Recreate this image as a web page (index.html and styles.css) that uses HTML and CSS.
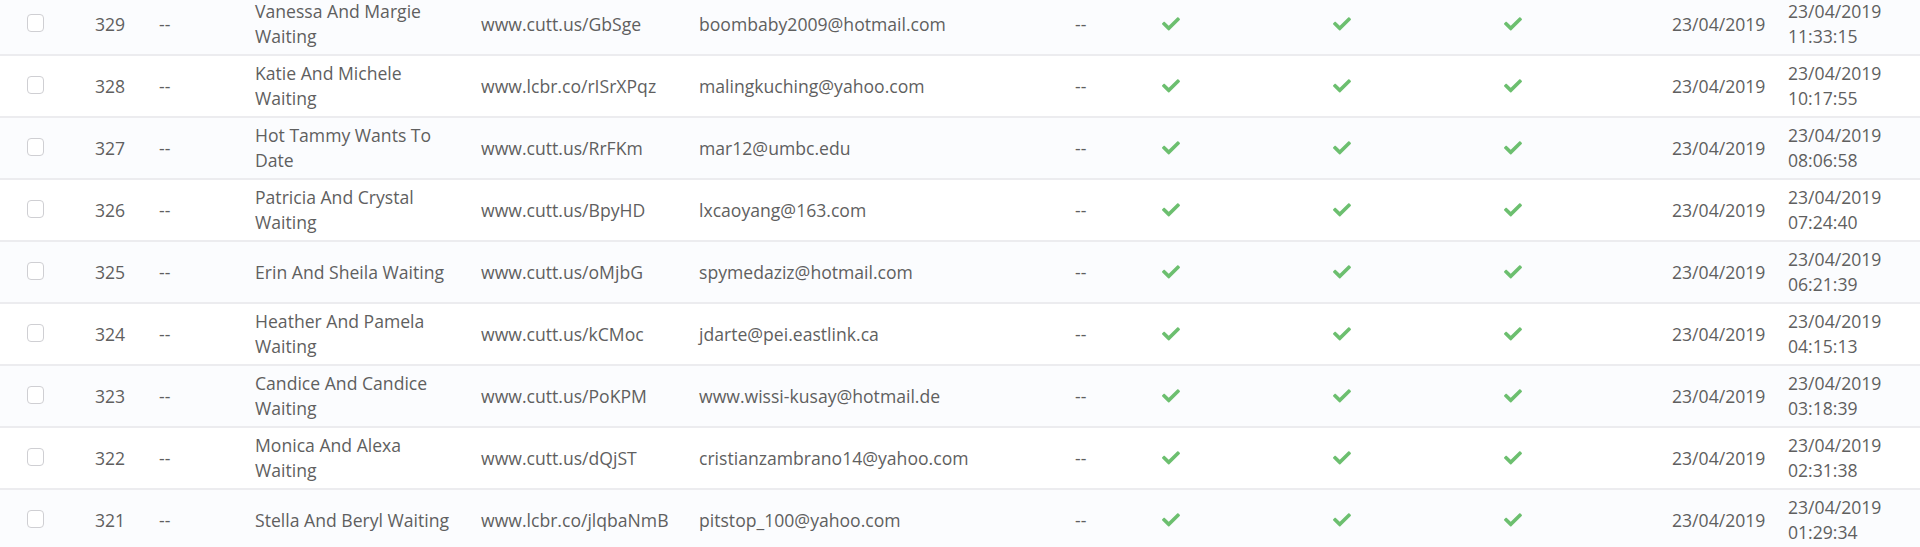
FILE: index.html
```html
<!DOCTYPE html>
<html lang="en">
<head>
<meta charset="utf-8">
<title>Links</title>
<link rel="stylesheet" href="styles.css">
</head>
<body>
<table class="grid">
  <colgroup>
    <col class="c-sel"><col class="c-id"><col class="c-dash"><col class="c-name"><col class="c-url"><col class="c-mail"><col class="c-dash2"><col class="c-ok"><col class="c-ok"><col class="c-ok-last"><col class="c-date"><col class="c-time">
  </colgroup>
  <tbody>
    <tr class="alt"><td class="sel"><span class="box"></span></td><td>329</td><td>--</td><td class="name">Vanessa And Margie Waiting</td><td>www.cutt.us/GbSge</td><td>boombaby2009@hotmail.com</td><td>--</td><td><svg class="ok" viewBox="0 70 512 380"><path d="M173.898 439.404l-166.4-166.4c-9.997-9.997-9.997-26.206 0-36.204l36.203-36.204c9.997-9.998 26.207-9.998 36.204 0L192 312.69 432.095 72.596c9.997-9.997 26.207-9.997 36.204 0l36.203 36.204c9.997 9.997 9.997 26.206 0 36.204l-294.4 294.401c-9.998 9.997-26.207 9.997-36.204-.001z"/></svg></td><td><svg class="ok" viewBox="0 70 512 380"><path d="M173.898 439.404l-166.4-166.4c-9.997-9.997-9.997-26.206 0-36.204l36.203-36.204c9.997-9.998 26.207-9.998 36.204 0L192 312.69 432.095 72.596c9.997-9.997 26.207-9.997 36.204 0l36.203 36.204c9.997 9.997 9.997 26.206 0 36.204l-294.4 294.401c-9.998 9.997-26.207 9.997-36.204-.001z"/></svg></td><td><svg class="ok" viewBox="0 70 512 380"><path d="M173.898 439.404l-166.4-166.4c-9.997-9.997-9.997-26.206 0-36.204l36.203-36.204c9.997-9.998 26.207-9.998 36.204 0L192 312.69 432.095 72.596c9.997-9.997 26.207-9.997 36.204 0l36.203 36.204c9.997 9.997 9.997 26.206 0 36.204l-294.4 294.401c-9.998 9.997-26.207 9.997-36.204-.001z"/></svg></td><td>23/04/2019</td><td class="time">23/04/2019 11:33:15</td></tr>
    <tr><td class="sel"><span class="box"></span></td><td>328</td><td>--</td><td class="name">Katie And Michele Waiting</td><td>www.lcbr.co/rISrXPqz</td><td>malingkuching@yahoo.com</td><td>--</td><td><svg class="ok" viewBox="0 70 512 380"><path d="M173.898 439.404l-166.4-166.4c-9.997-9.997-9.997-26.206 0-36.204l36.203-36.204c9.997-9.998 26.207-9.998 36.204 0L192 312.69 432.095 72.596c9.997-9.997 26.207-9.997 36.204 0l36.203 36.204c9.997 9.997 9.997 26.206 0 36.204l-294.4 294.401c-9.998 9.997-26.207 9.997-36.204-.001z"/></svg></td><td><svg class="ok" viewBox="0 70 512 380"><path d="M173.898 439.404l-166.4-166.4c-9.997-9.997-9.997-26.206 0-36.204l36.203-36.204c9.997-9.998 26.207-9.998 36.204 0L192 312.69 432.095 72.596c9.997-9.997 26.207-9.997 36.204 0l36.203 36.204c9.997 9.997 9.997 26.206 0 36.204l-294.4 294.401c-9.998 9.997-26.207 9.997-36.204-.001z"/></svg></td><td><svg class="ok" viewBox="0 70 512 380"><path d="M173.898 439.404l-166.4-166.4c-9.997-9.997-9.997-26.206 0-36.204l36.203-36.204c9.997-9.998 26.207-9.998 36.204 0L192 312.69 432.095 72.596c9.997-9.997 26.207-9.997 36.204 0l36.203 36.204c9.997 9.997 9.997 26.206 0 36.204l-294.4 294.401c-9.998 9.997-26.207 9.997-36.204-.001z"/></svg></td><td>23/04/2019</td><td class="time">23/04/2019 10:17:55</td></tr>
    <tr class="alt"><td class="sel"><span class="box"></span></td><td>327</td><td>--</td><td class="name">Hot Tammy Wants To Date</td><td>www.cutt.us/RrFKm</td><td>mar12@umbc.edu</td><td>--</td><td><svg class="ok" viewBox="0 70 512 380"><path d="M173.898 439.404l-166.4-166.4c-9.997-9.997-9.997-26.206 0-36.204l36.203-36.204c9.997-9.998 26.207-9.998 36.204 0L192 312.69 432.095 72.596c9.997-9.997 26.207-9.997 36.204 0l36.203 36.204c9.997 9.997 9.997 26.206 0 36.204l-294.4 294.401c-9.998 9.997-26.207 9.997-36.204-.001z"/></svg></td><td><svg class="ok" viewBox="0 70 512 380"><path d="M173.898 439.404l-166.4-166.4c-9.997-9.997-9.997-26.206 0-36.204l36.203-36.204c9.997-9.998 26.207-9.998 36.204 0L192 312.69 432.095 72.596c9.997-9.997 26.207-9.997 36.204 0l36.203 36.204c9.997 9.997 9.997 26.206 0 36.204l-294.4 294.401c-9.998 9.997-26.207 9.997-36.204-.001z"/></svg></td><td><svg class="ok" viewBox="0 70 512 380"><path d="M173.898 439.404l-166.4-166.4c-9.997-9.997-9.997-26.206 0-36.204l36.203-36.204c9.997-9.998 26.207-9.998 36.204 0L192 312.69 432.095 72.596c9.997-9.997 26.207-9.997 36.204 0l36.203 36.204c9.997 9.997 9.997 26.206 0 36.204l-294.4 294.401c-9.998 9.997-26.207 9.997-36.204-.001z"/></svg></td><td>23/04/2019</td><td class="time">23/04/2019 08:06:58</td></tr>
    <tr><td class="sel"><span class="box"></span></td><td>326</td><td>--</td><td class="name">Patricia And Crystal Waiting</td><td>www.cutt.us/BpyHD</td><td>lxcaoyang@163.com</td><td>--</td><td><svg class="ok" viewBox="0 70 512 380"><path d="M173.898 439.404l-166.4-166.4c-9.997-9.997-9.997-26.206 0-36.204l36.203-36.204c9.997-9.998 26.207-9.998 36.204 0L192 312.69 432.095 72.596c9.997-9.997 26.207-9.997 36.204 0l36.203 36.204c9.997 9.997 9.997 26.206 0 36.204l-294.4 294.401c-9.998 9.997-26.207 9.997-36.204-.001z"/></svg></td><td><svg class="ok" viewBox="0 70 512 380"><path d="M173.898 439.404l-166.4-166.4c-9.997-9.997-9.997-26.206 0-36.204l36.203-36.204c9.997-9.998 26.207-9.998 36.204 0L192 312.69 432.095 72.596c9.997-9.997 26.207-9.997 36.204 0l36.203 36.204c9.997 9.997 9.997 26.206 0 36.204l-294.4 294.401c-9.998 9.997-26.207 9.997-36.204-.001z"/></svg></td><td><svg class="ok" viewBox="0 70 512 380"><path d="M173.898 439.404l-166.4-166.4c-9.997-9.997-9.997-26.206 0-36.204l36.203-36.204c9.997-9.998 26.207-9.998 36.204 0L192 312.69 432.095 72.596c9.997-9.997 26.207-9.997 36.204 0l36.203 36.204c9.997 9.997 9.997 26.206 0 36.204l-294.4 294.401c-9.998 9.997-26.207 9.997-36.204-.001z"/></svg></td><td>23/04/2019</td><td class="time">23/04/2019 07:24:40</td></tr>
    <tr class="alt"><td class="sel"><span class="box"></span></td><td>325</td><td>--</td><td class="name">Erin And Sheila Waiting</td><td>www.cutt.us/oMjbG</td><td>spymedaziz@hotmail.com</td><td>--</td><td><svg class="ok" viewBox="0 70 512 380"><path d="M173.898 439.404l-166.4-166.4c-9.997-9.997-9.997-26.206 0-36.204l36.203-36.204c9.997-9.998 26.207-9.998 36.204 0L192 312.69 432.095 72.596c9.997-9.997 26.207-9.997 36.204 0l36.203 36.204c9.997 9.997 9.997 26.206 0 36.204l-294.4 294.401c-9.998 9.997-26.207 9.997-36.204-.001z"/></svg></td><td><svg class="ok" viewBox="0 70 512 380"><path d="M173.898 439.404l-166.4-166.4c-9.997-9.997-9.997-26.206 0-36.204l36.203-36.204c9.997-9.998 26.207-9.998 36.204 0L192 312.69 432.095 72.596c9.997-9.997 26.207-9.997 36.204 0l36.203 36.204c9.997 9.997 9.997 26.206 0 36.204l-294.4 294.401c-9.998 9.997-26.207 9.997-36.204-.001z"/></svg></td><td><svg class="ok" viewBox="0 70 512 380"><path d="M173.898 439.404l-166.4-166.4c-9.997-9.997-9.997-26.206 0-36.204l36.203-36.204c9.997-9.998 26.207-9.998 36.204 0L192 312.69 432.095 72.596c9.997-9.997 26.207-9.997 36.204 0l36.203 36.204c9.997 9.997 9.997 26.206 0 36.204l-294.4 294.401c-9.998 9.997-26.207 9.997-36.204-.001z"/></svg></td><td>23/04/2019</td><td class="time">23/04/2019 06:21:39</td></tr>
    <tr><td class="sel"><span class="box"></span></td><td>324</td><td>--</td><td class="name">Heather And Pamela Waiting</td><td>www.cutt.us/kCMoc</td><td>jdarte@pei.eastlink.ca</td><td>--</td><td><svg class="ok" viewBox="0 70 512 380"><path d="M173.898 439.404l-166.4-166.4c-9.997-9.997-9.997-26.206 0-36.204l36.203-36.204c9.997-9.998 26.207-9.998 36.204 0L192 312.69 432.095 72.596c9.997-9.997 26.207-9.997 36.204 0l36.203 36.204c9.997 9.997 9.997 26.206 0 36.204l-294.4 294.401c-9.998 9.997-26.207 9.997-36.204-.001z"/></svg></td><td><svg class="ok" viewBox="0 70 512 380"><path d="M173.898 439.404l-166.4-166.4c-9.997-9.997-9.997-26.206 0-36.204l36.203-36.204c9.997-9.998 26.207-9.998 36.204 0L192 312.69 432.095 72.596c9.997-9.997 26.207-9.997 36.204 0l36.203 36.204c9.997 9.997 9.997 26.206 0 36.204l-294.4 294.401c-9.998 9.997-26.207 9.997-36.204-.001z"/></svg></td><td><svg class="ok" viewBox="0 70 512 380"><path d="M173.898 439.404l-166.4-166.4c-9.997-9.997-9.997-26.206 0-36.204l36.203-36.204c9.997-9.998 26.207-9.998 36.204 0L192 312.69 432.095 72.596c9.997-9.997 26.207-9.997 36.204 0l36.203 36.204c9.997 9.997 9.997 26.206 0 36.204l-294.4 294.401c-9.998 9.997-26.207 9.997-36.204-.001z"/></svg></td><td>23/04/2019</td><td class="time">23/04/2019 04:15:13</td></tr>
    <tr class="alt"><td class="sel"><span class="box"></span></td><td>323</td><td>--</td><td class="name">Candice And Candice Waiting</td><td>www.cutt.us/PoKPM</td><td>www.wissi-kusay@hotmail.de</td><td>--</td><td><svg class="ok" viewBox="0 70 512 380"><path d="M173.898 439.404l-166.4-166.4c-9.997-9.997-9.997-26.206 0-36.204l36.203-36.204c9.997-9.998 26.207-9.998 36.204 0L192 312.69 432.095 72.596c9.997-9.997 26.207-9.997 36.204 0l36.203 36.204c9.997 9.997 9.997 26.206 0 36.204l-294.4 294.401c-9.998 9.997-26.207 9.997-36.204-.001z"/></svg></td><td><svg class="ok" viewBox="0 70 512 380"><path d="M173.898 439.404l-166.4-166.4c-9.997-9.997-9.997-26.206 0-36.204l36.203-36.204c9.997-9.998 26.207-9.998 36.204 0L192 312.69 432.095 72.596c9.997-9.997 26.207-9.997 36.204 0l36.203 36.204c9.997 9.997 9.997 26.206 0 36.204l-294.4 294.401c-9.998 9.997-26.207 9.997-36.204-.001z"/></svg></td><td><svg class="ok" viewBox="0 70 512 380"><path d="M173.898 439.404l-166.4-166.4c-9.997-9.997-9.997-26.206 0-36.204l36.203-36.204c9.997-9.998 26.207-9.998 36.204 0L192 312.69 432.095 72.596c9.997-9.997 26.207-9.997 36.204 0l36.203 36.204c9.997 9.997 9.997 26.206 0 36.204l-294.4 294.401c-9.998 9.997-26.207 9.997-36.204-.001z"/></svg></td><td>23/04/2019</td><td class="time">23/04/2019 03:18:39</td></tr>
    <tr><td class="sel"><span class="box"></span></td><td>322</td><td>--</td><td class="name">Monica And Alexa Waiting</td><td>www.cutt.us/dQjST</td><td>cristianzambrano14@yahoo.com</td><td>--</td><td><svg class="ok" viewBox="0 70 512 380"><path d="M173.898 439.404l-166.4-166.4c-9.997-9.997-9.997-26.206 0-36.204l36.203-36.204c9.997-9.998 26.207-9.998 36.204 0L192 312.69 432.095 72.596c9.997-9.997 26.207-9.997 36.204 0l36.203 36.204c9.997 9.997 9.997 26.206 0 36.204l-294.4 294.401c-9.998 9.997-26.207 9.997-36.204-.001z"/></svg></td><td><svg class="ok" viewBox="0 70 512 380"><path d="M173.898 439.404l-166.4-166.4c-9.997-9.997-9.997-26.206 0-36.204l36.203-36.204c9.997-9.998 26.207-9.998 36.204 0L192 312.69 432.095 72.596c9.997-9.997 26.207-9.997 36.204 0l36.203 36.204c9.997 9.997 9.997 26.206 0 36.204l-294.4 294.401c-9.998 9.997-26.207 9.997-36.204-.001z"/></svg></td><td><svg class="ok" viewBox="0 70 512 380"><path d="M173.898 439.404l-166.4-166.4c-9.997-9.997-9.997-26.206 0-36.204l36.203-36.204c9.997-9.998 26.207-9.998 36.204 0L192 312.69 432.095 72.596c9.997-9.997 26.207-9.997 36.204 0l36.203 36.204c9.997 9.997 9.997 26.206 0 36.204l-294.4 294.401c-9.998 9.997-26.207 9.997-36.204-.001z"/></svg></td><td>23/04/2019</td><td class="time">23/04/2019 02:31:38</td></tr>
    <tr class="alt"><td class="sel"><span class="box"></span></td><td>321</td><td>--</td><td class="name">Stella And Beryl Waiting</td><td>www.lcbr.co/jlqbaNmB</td><td>pitstop_100@yahoo.com</td><td>--</td><td><svg class="ok" viewBox="0 70 512 380"><path d="M173.898 439.404l-166.4-166.4c-9.997-9.997-9.997-26.206 0-36.204l36.203-36.204c9.997-9.998 26.207-9.998 36.204 0L192 312.69 432.095 72.596c9.997-9.997 26.207-9.997 36.204 0l36.203 36.204c9.997 9.997 9.997 26.206 0 36.204l-294.4 294.401c-9.998 9.997-26.207 9.997-36.204-.001z"/></svg></td><td><svg class="ok" viewBox="0 70 512 380"><path d="M173.898 439.404l-166.4-166.4c-9.997-9.997-9.997-26.206 0-36.204l36.203-36.204c9.997-9.998 26.207-9.998 36.204 0L192 312.69 432.095 72.596c9.997-9.997 26.207-9.997 36.204 0l36.203 36.204c9.997 9.997 9.997 26.206 0 36.204l-294.4 294.401c-9.998 9.997-26.207 9.997-36.204-.001z"/></svg></td><td><svg class="ok" viewBox="0 70 512 380"><path d="M173.898 439.404l-166.4-166.4c-9.997-9.997-9.997-26.206 0-36.204l36.203-36.204c9.997-9.998 26.207-9.998 36.204 0L192 312.69 432.095 72.596c9.997-9.997 26.207-9.997 36.204 0l36.203 36.204c9.997 9.997 9.997 26.206 0 36.204l-294.4 294.401c-9.998 9.997-26.207 9.997-36.204-.001z"/></svg></td><td>23/04/2019</td><td class="time">23/04/2019 01:29:34</td></tr>
  </tbody>
</table>
</body>
</html>
```
FILE: styles.css
```css
html, body {
  margin: 0;
  padding: 0;
  background: #ffffff;
  overflow: hidden;
}
body {
  font-family: "Open Sans", "Noto Sans", sans-serif;
  font-size: 17.6px;
  line-height: 25px;
  color: #5f5f5f;
}
.grid {
  width: 1920px;
  table-layout: fixed;
  border-collapse: separate;
  border-spacing: 0;
  margin-top: -6px;
}
.c-sel { width: 95px; }
.c-id { width: 64px; }
.c-dash { width: 96px; }
.c-name { width: 226px; }
.c-url { width: 218px; }
.c-mail { width: 376px; }
.c-dash2 { width: 87px; }
.c-ok { width: 171px; }
.c-ok-last { width: 168px; }
.c-date { width: 116px; }
.c-time { width: 134px; }
.grid td {
  box-sizing: content-box;
  height: 60px;
  padding: 0;
  vertical-align: middle;
  border-bottom: 2px solid #ececef;
  white-space: nowrap;
}
.grid tr.alt td { background: #fbfcfe; }
.grid td.name { white-space: normal; padding-right: 24px; }
.grid td.time { white-space: normal; padding-right: 29px; }
.grid td.sel { padding-left: 27px; }
.box {
  display: block;
  box-sizing: border-box;
  width: 17px;
  height: 18px;
  margin-top: -3px;
  border: 1px solid #cfcfd3;
  border-radius: 4px;
  background: #fff;
}
.ok {
  display: block;
  width: 18px;
  height: 14px;
  fill: #6cbf6f;
}
```
